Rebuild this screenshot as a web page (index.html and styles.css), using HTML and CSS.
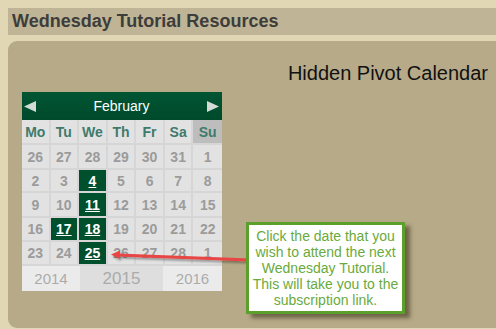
FILE: index.html
```html
<!DOCTYPE html>
<html>
<head>
<meta charset="utf-8">
<link rel="stylesheet" href="styles.css">
</head>
<body>
<div class="bar"><h1 class="bar-title">Wednesday Tutorial Resources</h1></div>
<div class="panel">
  <div class="title">Hidden Pivot Calendar</div>
  <div class="cal">
    <div class="cal-head">
      <svg class="arrow" width="12" height="11" viewBox="0 0 12 11"><polygon points="0,5.5 12,0 12,11"/></svg>
      <span class="month">February</span>
      <svg class="arrow" width="12" height="11" viewBox="0 0 12 11"><polygon points="12,5.5 0,0 0,11"/></svg>
    </div>
    <div class="grid">
      <div class="dn">Mo</div><div class="dn">Tu</div><div class="dn">We</div><div class="dn">Th</div><div class="dn">Fr</div><div class="dn">Sa</div><div class="dn su">Su</div>
      <div class="d">26</div><div class="d">27</div><div class="d">28</div><div class="d">29</div><div class="d">30</div><div class="d">31</div><div class="d">1</div>
      <div class="d">2</div><div class="d">3</div><div class="d on"><a>4</a></div><div class="d">5</div><div class="d">6</div><div class="d">7</div><div class="d">8</div>
      <div class="d">9</div><div class="d">10</div><div class="d on"><a>11</a></div><div class="d">12</div><div class="d">13</div><div class="d">14</div><div class="d">15</div>
      <div class="d">16</div><div class="d on"><a>17</a></div><div class="d on"><a>18</a></div><div class="d">19</div><div class="d">20</div><div class="d">21</div><div class="d">22</div>
      <div class="d">23</div><div class="d">24</div><div class="d on"><a>25</a></div><div class="d">26</div><div class="d">27</div><div class="d">28</div><div class="d">1</div>
    </div>
    <div class="years">
      <div class="yr y1">2014</div><div class="yr y2">2015</div><div class="yr y3">2016</div>
    </div>
  </div>
  <svg class="pointer" width="150" height="20" viewBox="0 0 150 20">
    <defs><filter id="sh" x="-10%" y="-50%" width="120%" height="200%"><feDropShadow dx="1" dy="2" stdDeviation="1" flood-color="#000" flood-opacity="0.35"/></filter></defs>
    <g filter="url(#sh)">
      <line x1="8" y1="8" x2="140" y2="13" stroke="#e84545" stroke-width="3"/>
      <polygon points="1,7.5 10,3.5 10,12" fill="#e84545"/>
    </g>
  </svg>
  <div class="callout">Click the date that you wish to attend the next Wednesday Tutorial. This will take you to the subscription link.</div>
</div>
</body>
</html>
```
FILE: styles.css
```css
html, body { height: 100%; }
body {
  margin: 8px 0 0 8px;
  background: #e2d7b4;
  font-family: "Liberation Sans", Arial, sans-serif;
  overflow: hidden;
}
.bar {
  background: #bfb495;
  height: 27px;
  display: flex;
  align-items: center;
  padding-left: 4px;
}
.bar-title {
  margin: 0;
  font-size: 18px;
  font-weight: bold;
  color: #3d3d3b;
}
.panel {
  position: relative;
  margin-top: 6px;
  background: #b6aa88;
  border-radius: 9px 0 0 9px;
  height: 287px;
  padding: 0 0 0 14px;
}
.title {
  text-align: right;
  padding: 22px 8px 0 0;
  height: 29px;
  font-size: 20px;
  line-height: 20px;
  color: #111;
}
.cal {
  width: 200px;
}
.cal-head {
  height: 28px;
  background: linear-gradient(#005533, #004a2c);
  display: flex;
  align-items: center;
  justify-content: space-between;
  color: #fff;
  padding: 0 3px 0 2px;
}
.arrow { fill: #d3dbd6; display: block; }
.month { font-size: 14px; }
.grid {
  display: grid;
  grid-template-columns: repeat(7, 1fr);
  grid-template-rows: 25px 25px 23px 25px 24px 24px;
  background: #e2e2e2;
}
.grid > div {
  display: flex;
  align-items: center;
  justify-content: center;
  border-right: 2px solid #d6d6d6;
  border-bottom: 2px solid #d6d6d6;
}
.grid > div:nth-child(7n) { border-right: 0; }
.dn {
  font-size: 14px;
  font-weight: bold;
  color: #3f7b6c;
}
.dn.su { background: #bdbdbd; }
.d {
  font-size: 14px;
  font-weight: bold;
  color: #9b9b9b;
}
.d.on { background: #00502e; }
.d.on a {
  color: #fff;
  text-decoration: underline;
}
.years {
  display: grid;
  grid-template-columns: 58px 83px 59px;
  height: 25px;
}
.yr {
  display: flex;
  align-items: center;
  justify-content: center;
  font-size: 15px;
  color: #ababab;
}
.y1, .y3 { background: #ebebeb; }
.y2 { background: #dedede; font-size: 17px; }
.pointer {
  position: absolute;
  left: 102px;
  top: 206px;
}
.callout {
  position: absolute;
  left: 238px;
  top: 181px;
  width: 147px;
  height: 80px;
  padding: 3px 3px;
  background: #fff;
  border: 3px solid #5c9f2b;
  box-shadow: 5px 4px 4px rgba(40, 30, 10, 0.5);
  color: #6aaa3c;
  font-size: 14px;
  line-height: 16px;
  text-align: center;
}
```
